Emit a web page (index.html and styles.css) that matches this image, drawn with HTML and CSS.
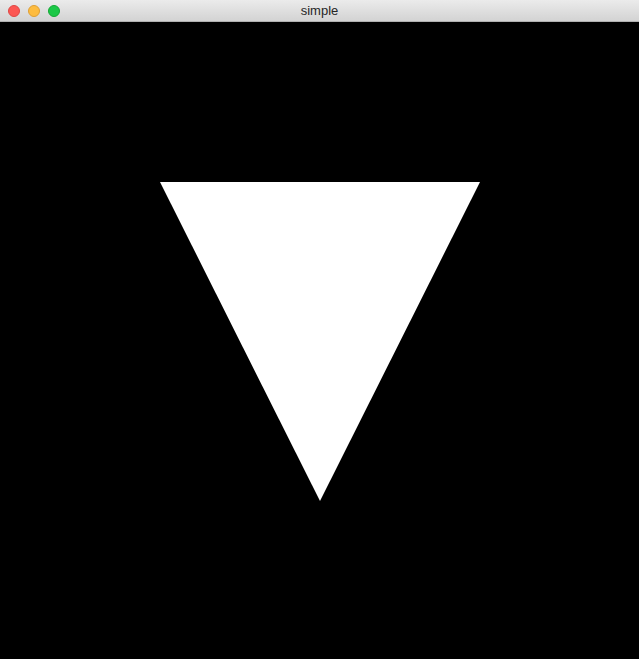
FILE: index.html
```html
<!DOCTYPE html>
<html>
<head>
<meta charset="utf-8">
<link rel="stylesheet" href="styles.css">
</head>
<body>
<div class="window">
  <div class="titlebar">
    <div class="lights">
      <span class="light red"></span>
      <span class="light yellow"></span>
      <span class="light green"></span>
    </div>
    <div class="title">simple</div>
  </div>
  <div class="canvas">
    <svg class="scene" width="639" height="637" viewBox="0 0 639 637">
      <polygon points="160,160 480,160 320,479" fill="#fff"/>
    </svg>
  </div>
</div>
</body>
</html>
```
FILE: styles.css
```css
html, body { margin: 0; padding: 0; background: #000; }
.window { width: 639px; height: 659px; display: flex; flex-direction: column; }
.titlebar {
  height: 22px; box-sizing: border-box;
  background: linear-gradient(#ebebeb, #d3d3d3);
  border-bottom: 1px solid #b1b1b1;
  position: relative;
  display: flex; align-items: center; justify-content: center;
}
.lights { position: absolute; left: 8px; top: 5px; display: flex; gap: 8px; }
.light { width: 12px; height: 12px; border-radius: 50%; box-sizing: border-box; }
.red { background: #fc5753; border: 0.5px solid #df4744; }
.yellow { background: #fdbc40; border: 0.5px solid #de9f34; }
.green { background: #1bc847; border: 0.5px solid #13a834; }
.title { font-family: "Helvetica Neue", "Liberation Sans", Arial, sans-serif; font-size: 13px; color: #262626; }
.canvas { flex: 1; background: #000; }
.scene { display: block; }
```
